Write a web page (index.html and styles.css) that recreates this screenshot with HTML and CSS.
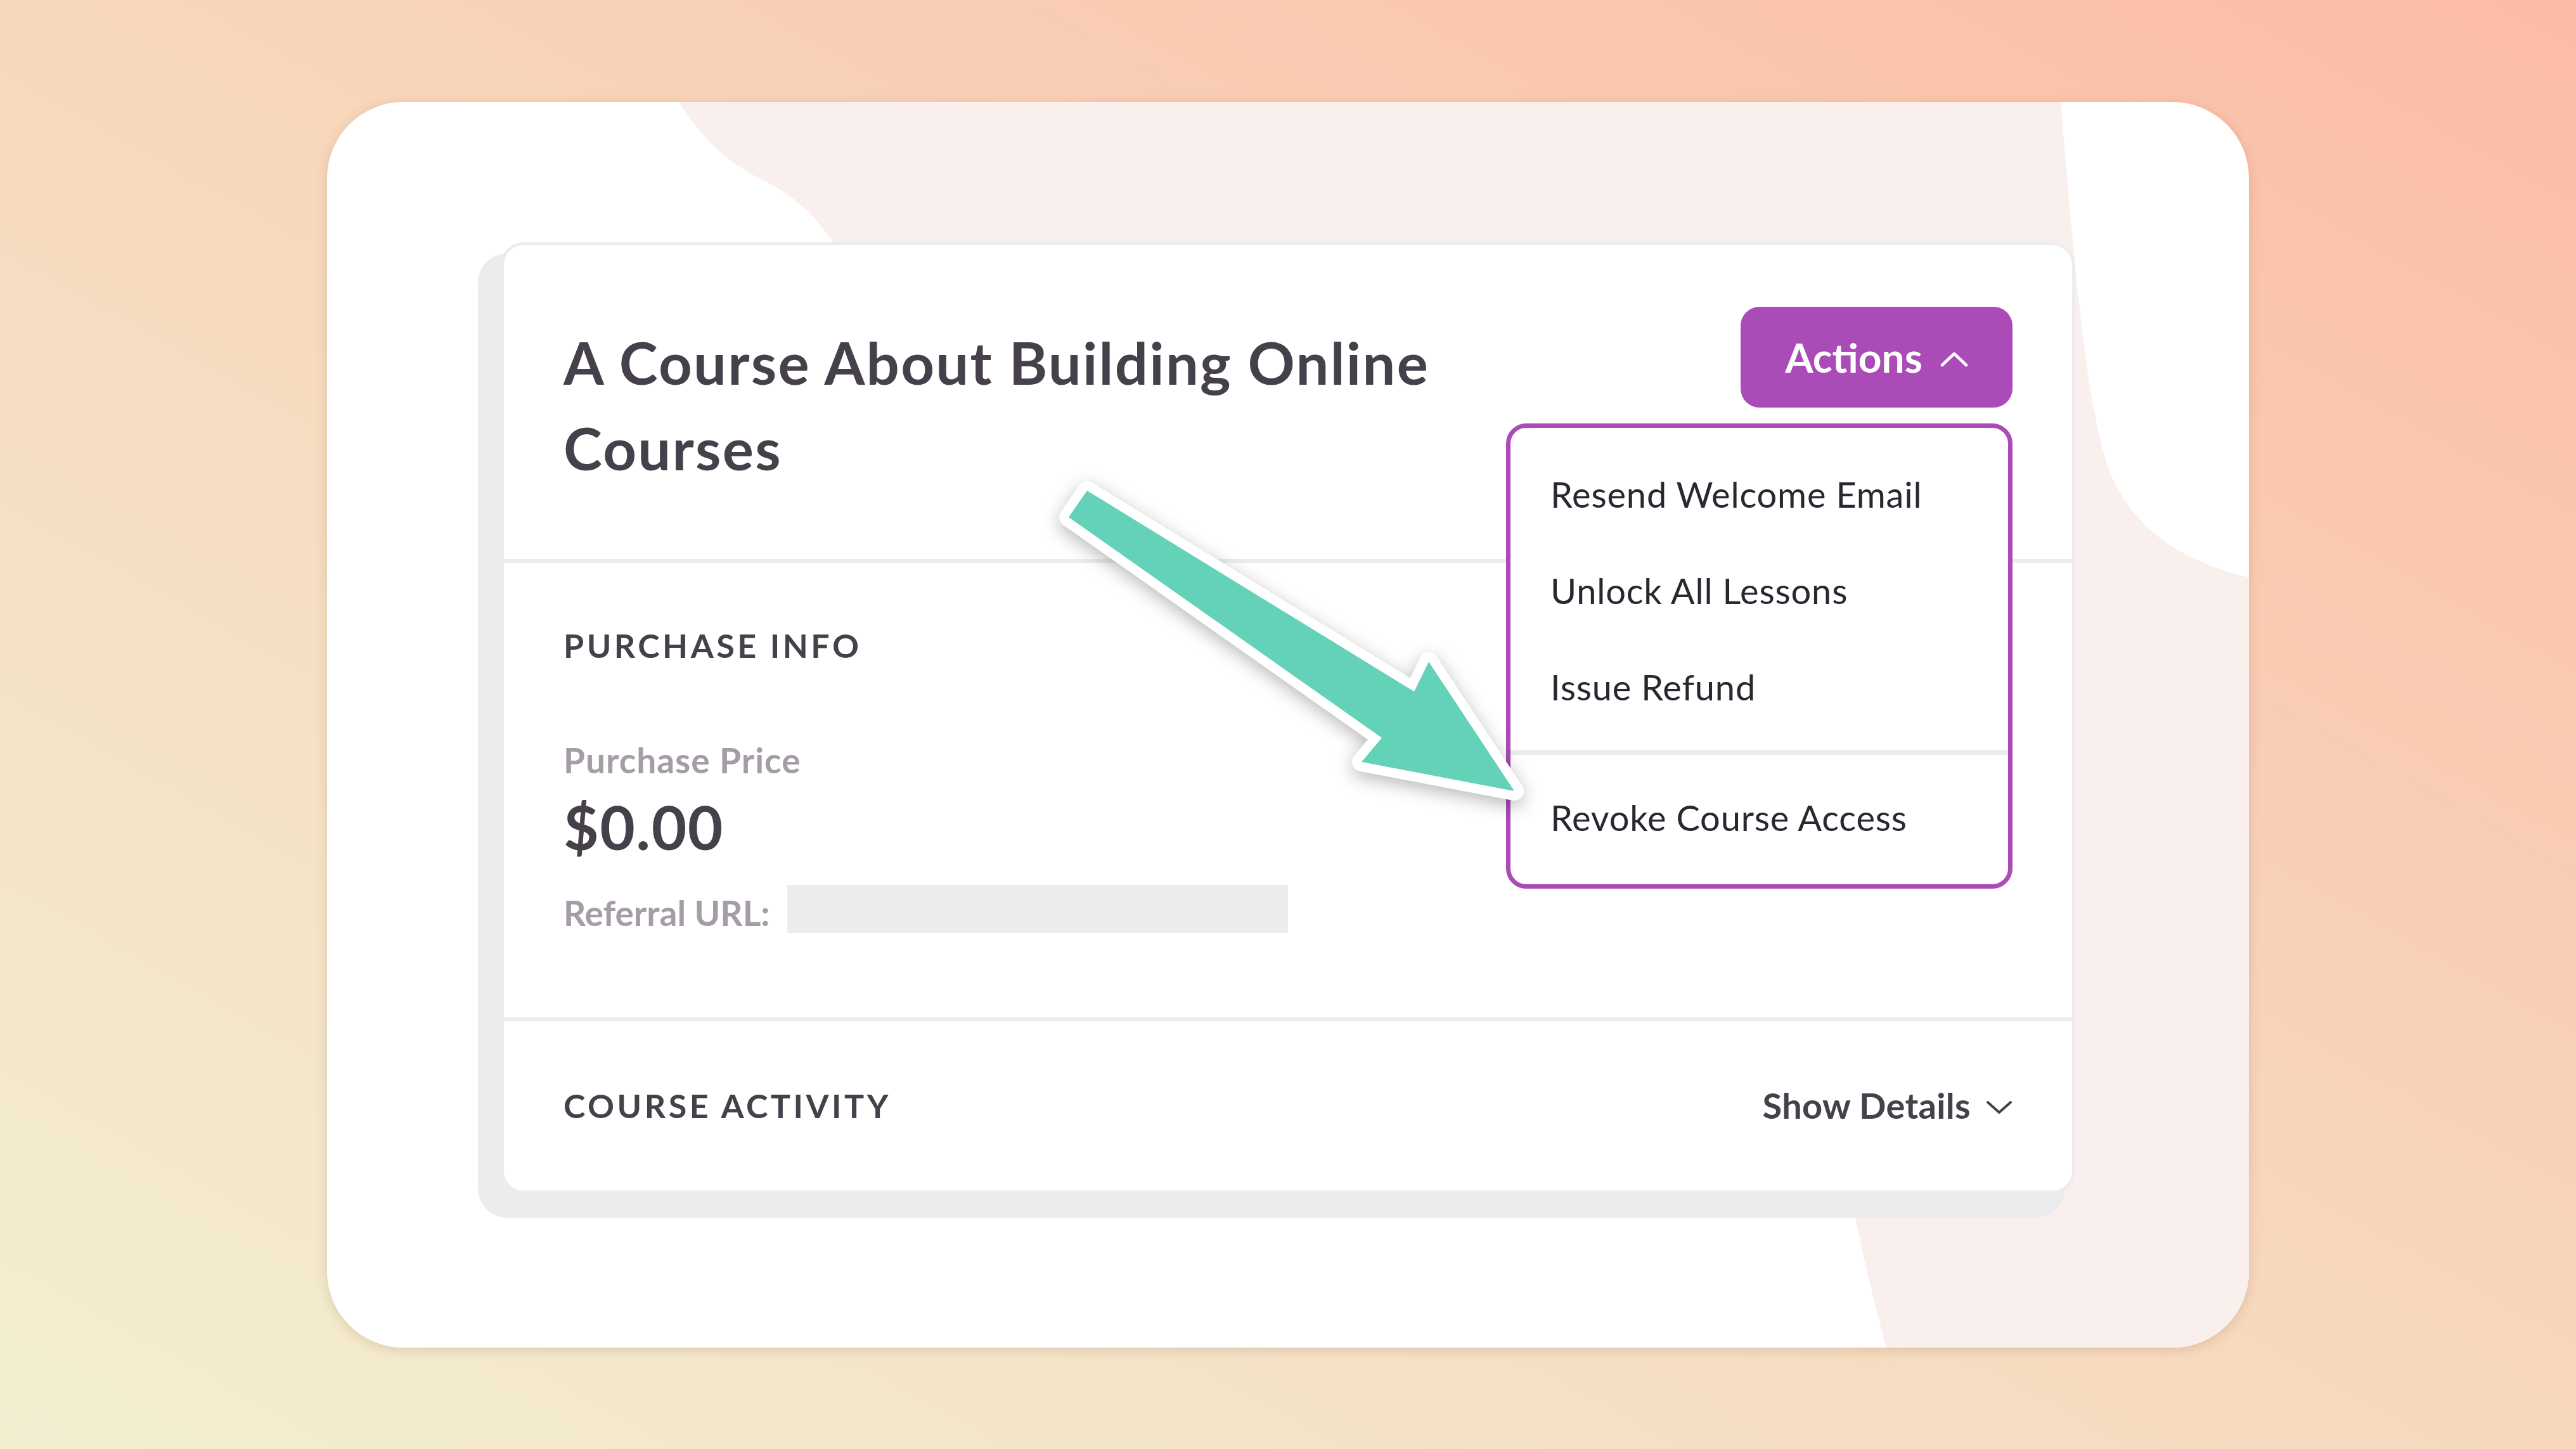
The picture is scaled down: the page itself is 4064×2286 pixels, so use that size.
FILE: index.html
```html
<!DOCTYPE html>
<html lang="en">
<head>
<meta charset="utf-8">
<title>Course purchase – Actions</title>
<link rel="stylesheet" href="styles.css">
</head>
<body>
<main class="stage">
  <section class="frame">
    <svg class="blob" viewBox="0 0 3032 1965" width="3032" height="1965" aria-hidden="true">
      <path d="M555 0 C600 70 640 100 693 126 C740 150 770 180 796 218 L1400 800 L2411 1760 C2430 1850 2445 1910 2460 1965 L3032 1965 L3032 750 C2930 725 2860 680 2820 600 C2780 520 2760 300 2735 0 Z" fill="#f9f0ed"/>
    </svg>

    <article class="card">
      <header class="card-head">
        <h1 class="title">A Course About Building Online Courses</h1>
        <div class="actions">
          <button class="actions-btn" type="button">
            <span>Actions</span>
            <svg class="chev-up" viewBox="0 0 44 24" width="44" height="24" aria-hidden="true">
              <polyline points="3,21 22,3 41,21" fill="none" stroke="#fff" stroke-width="4.5" stroke-linecap="round" stroke-linejoin="round"/>
            </svg>
          </button>
          <ul class="menu">
            <li class="menu-item">Resend Welcome Email</li>
            <li class="menu-item">Unlock All Lessons</li>
            <li class="menu-item">Issue Refund</li>
            <li class="menu-sep" role="separator"></li>
            <li class="menu-item">Revoke Course Access</li>
          </ul>
        </div>
      </header>

      <section class="purchase">
        <h2 class="section-label">PURCHASE INFO</h2>
        <p class="field-label">Purchase Price</p>
        <p class="price">$0.00</p>
        <div class="referral">
          <span class="referral-label">Referral URL:</span>
          <span class="redact"></span>
        </div>
      </section>

      <section class="activity">
        <h2 class="section-label">COURSE ACTIVITY</h2>
        <button class="details" type="button">
          <span>Show Details</span>
          <svg class="chev-down" viewBox="0 0 42 24" width="42" height="24" aria-hidden="true">
            <polyline points="3,4 21,20 39,4" fill="none" stroke="#45404a" stroke-width="4" stroke-linecap="round" stroke-linejoin="round"/>
          </svg>
        </button>
      </section>
    </article>

    <svg class="arrow" viewBox="0 0 3032 1965" width="3032" height="1965" aria-hidden="true">
      <polygon points="1199,613 1715,930 1738,883 1873,1087 1632,1041 1664,1003 1170,655"
        fill="#63d2b9" stroke="#ffffff" stroke-width="30" stroke-linejoin="round" paint-order="stroke"/>
    </svg>
  </section>
</main>
</body>
</html>
```

FILE: styles.css
```css
* { box-sizing: border-box; }

html, body {
  margin: 0;
  padding: 0;
}

body {
  width: 4064px;
  height: 2286px;
  overflow: hidden;
  font-family: "Lato", "Open Sans", "Liberation Sans", sans-serif;
  background: linear-gradient(to top right, #f3efd1 0%, #f7d8bd 50%, #fcbca5 100%);
}

.stage {
  width: 100%;
  height: 100%;
  display: flex;
  align-items: center;
  justify-content: center;
}

.frame {
  position: relative;
  width: 3032px;
  height: 1965px;
  padding: 221px 274px 0;
  background: #ffffff;
  border-radius: 120px;
  overflow: hidden;
  box-shadow: 0 4px 18px rgba(120, 70, 40, 0.18);
}

.blob {
  position: absolute;
  left: 0;
  top: 0;
  z-index: 0;
}

.card {
  position: relative;
  z-index: 1;
  width: 2484px;
  height: 1501px;
  background: #ffffff;
  border: 5px solid #ededed;
  border-radius: 36px;
  box-shadow: -26px 28px 0 10px #ecebed;
  color: #45404a;
}

.card-head {
  display: flex;
  justify-content: space-between;
  align-items: flex-start;
  height: 501px;
  padding: 97px 94px 0;
  border-bottom: 6px solid #ededed;
}

.title {
  margin: 20px 0 0;
  max-width: 1560px;
  font-size: 92px;
  line-height: 135px;
  font-weight: 700;
  letter-spacing: 2.3px;
  color: #45404a;
}

.actions {
  position: relative;
}

.actions-btn {
  display: flex;
  align-items: center;
  justify-content: center;
  gap: 28px;
  width: 429px;
  height: 159px;
  padding: 0;
  border: none;
  border-radius: 30px;
  background: #ab4bb8;
  color: #ffffff;
  font-family: inherit;
  font-size: 64px;
  font-weight: 700;
}

.chev-up {
  margin-top: 8px;
}

.menu {
  position: absolute;
  top: 184px;
  right: 0;
  z-index: 2;
  width: 799px;
  margin: 0;
  padding: 29px 0;
  list-style: none;
  background: #ffffff;
  border: 7px solid #ab4bb8;
  border-radius: 32px;
}

.menu-item {
  display: flex;
  align-items: center;
  height: 152px;
  padding-left: 63px;
  font-size: 56px;
  font-weight: 400;
  letter-spacing: 0.8px;
  color: #2b2730;
  white-space: nowrap;
}

.menu-sep {
  height: 8px;
  margin: 23px 0;
  background: #ececec;
}

.purchase {
  padding: 100px 94px 133px;
  border-bottom: 6px solid #ededed;
}

.section-label {
  margin: 0;
  font-size: 52px;
  line-height: 60px;
  font-weight: 700;
  letter-spacing: 4.5px;
  color: #45404a;
}

.field-label {
  margin: 121px 0 0;
  font-size: 55px;
  line-height: 60px;
  font-weight: 700;
  letter-spacing: 1px;
  color: #a59ca8;
}

.price {
  margin: 20px 0 0;
  font-size: 96px;
  line-height: 110px;
  font-weight: 700;
  letter-spacing: 1.5px;
  color: #45404a;
}

.referral {
  display: flex;
  align-items: flex-start;
  gap: 28px;
  margin-top: 37px;
}

.referral-label {
  margin-top: 14px;
  font-size: 55px;
  line-height: 60px;
  font-weight: 700;
  color: #a59ca8;
}

.redact {
  display: block;
  width: 790px;
  height: 76px;
  background: #ececec;
}

.activity {
  display: flex;
  align-items: center;
  justify-content: space-between;
  height: 266px;
  padding: 0 94px;
}

.details {
  display: flex;
  align-items: center;
  gap: 24px;
  padding: 0;
  border: none;
  background: transparent;
  color: #45404a;
  font-family: inherit;
  font-size: 56px;
  font-weight: 700;
  letter-spacing: 0.3px;
}

.chev-down {
  margin-top: 6px;
}

.arrow {
  position: absolute;
  left: 0;
  top: 0;
  z-index: 3;
  pointer-events: none;
  filter: drop-shadow(0 8px 14px rgba(0, 0, 0, 0.28));
}
```
